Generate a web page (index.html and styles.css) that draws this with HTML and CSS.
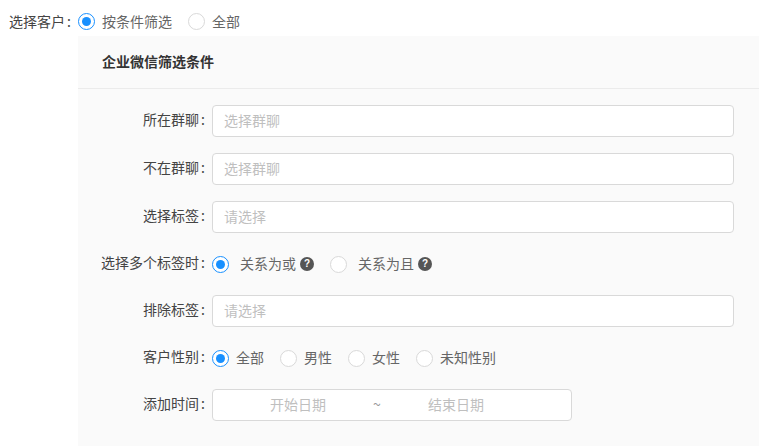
FILE: index.html
```html
<!DOCTYPE html>
<html>
	<head>
		<meta charset="utf-8">
		<title>选择客户</title>
		<link rel="stylesheet" href="styles.css">
	</head>
	<body>
		<div class="top-row">
			<span class="top-label">选择客户<i class="colon">:</i></span>
			<label class="radio on"><span class="dot"></span><span class="radio-text">按条件筛选</span></label>
			<label class="radio"><span class="dot"></span><span class="radio-text">全部</span></label>
		</div>
		<div class="panel">
			<div class="panel-head">企业微信筛选条件</div>
			<div class="panel-body">
				<div class="row">
					<span class="label">所在群聊<i class="colon">:</i></span>
					<div class="input">选择群聊</div>
				</div>
				<div class="row">
					<span class="label">不在群聊<i class="colon">:</i></span>
					<div class="input">选择群聊</div>
				</div>
				<div class="row">
					<span class="label">选择标签<i class="colon">:</i></span>
					<div class="input">请选择</div>
				</div>
				<div class="row row-radio">
					<span class="label">选择多个标签时<i class="colon">:</i></span>
					<label class="radio radio-wide on"><span class="dot"></span><span class="radio-text">关系为或</span><span class="help">?</span></label>
					<label class="radio radio-wide"><span class="dot"></span><span class="radio-text">关系为且</span><span class="help">?</span></label>
				</div>
				<div class="row">
					<span class="label">排除标签<i class="colon">:</i></span>
					<div class="input">请选择</div>
				</div>
				<div class="row row-radio">
					<span class="label">客户性别<i class="colon">:</i></span>
					<label class="radio on"><span class="dot"></span><span class="radio-text">全部</span></label>
					<label class="radio"><span class="dot"></span><span class="radio-text">男性</span></label>
					<label class="radio"><span class="dot"></span><span class="radio-text">女性</span></label>
					<label class="radio"><span class="dot"></span><span class="radio-text">未知性别</span></label>
				</div>
				<div class="row">
					<span class="label">添加时间<i class="colon">:</i></span>
					<div class="date-range">
						<span class="date-text">开始日期</span>
						<span class="date-sep">~</span>
						<span class="date-text">结束日期</span>
					</div>
				</div>
			</div>
		</div>
	</body>
</html>
```

FILE: styles.css
```css
html, body{
	height: 100%;
}
body{
	margin: 0;
	background: #fff;
	color: #444;
	font-family: "Noto Sans CJK SC", "Liberation Sans", sans-serif;
	font-size: 14px;
	overflow: hidden;
}
.colon{
	font-style: normal;
	margin-left: 2px;
}
.top-row{
	display: flex;
	align-items: center;
	height: 36px;
	box-sizing: border-box;
	padding: 7px 0 0 9px;
}
.top-label{
	width: 69px;
	white-space: nowrap;
	padding-bottom: 2px;
}
.radio{
	display: flex;
	align-items: center;
	margin-right: 16px;
	color: #666;
}
.dot{
	width: 17px;
	height: 17px;
	margin-right: -1px;
	box-sizing: border-box;
	border: 1px solid #d9d9d9;
	border-radius: 50%;
	background: #fff;
	display: block;
	position: relative;
	flex: none;
}
.radio.on .dot{
	border-color: #1890ff;
}
.radio.on .dot::after{
	content: "";
	position: absolute;
	left: 3px;
	top: 3px;
	width: 9px;
	height: 9px;
	border-radius: 50%;
	background: #1890ff;
}
.radio-text{
	margin-left: 8px;
	padding-bottom: 2px;
	white-space: nowrap;
}
.radio-wide .radio-text{
	margin-left: 12px;
}
.help{
	width: 14px;
	height: 14px;
	margin-left: 4px;
	border-radius: 50%;
	background: #555;
	color: #fff;
	font-size: 10px;
	font-weight: 700;
	line-height: 14px;
	text-align: center;
	font-family: "Liberation Sans", sans-serif;
}
.panel{
	margin-left: 78px;
	height: 410px;
	background: #fafafa;
}
.panel-head{
	height: 53px;
	box-sizing: border-box;
	padding-left: 24px;
	line-height: 50px;
	font-weight: 700;
	color: #333;
	border-bottom: 1px solid #ebebeb;
}
.panel-body{
	padding-top: 16px;
}
.row{
	display: flex;
	align-items: center;
	height: 32px;
	margin-bottom: 16px;
}
.row-radio{
	height: 30px;
}
.label{
	width: 127px;
	margin-right: 7px;
	padding-bottom: 4px;
	text-align: right;
	white-space: nowrap;
	flex: none;
}
.input{
	width: 522px;
	height: 32px;
	box-sizing: border-box;
	padding-left: 11px;
	line-height: 28px;
	background: #fff;
	border: 1px solid #d9d9d9;
	border-radius: 4px;
	color: #bfbfbf;
}
.date-range{
	display: flex;
	align-items: center;
	width: 360px;
	height: 32px;
	box-sizing: border-box;
	padding: 0 0 2px 10px;
	background: #fff;
	border: 1px solid #d9d9d9;
	border-radius: 4px;
	color: #bfbfbf;
}
.date-text{
	width: 150px;
	text-align: center;
}
.date-sep{
	width: 8px;
	text-align: center;
	color: #999;
}
```
